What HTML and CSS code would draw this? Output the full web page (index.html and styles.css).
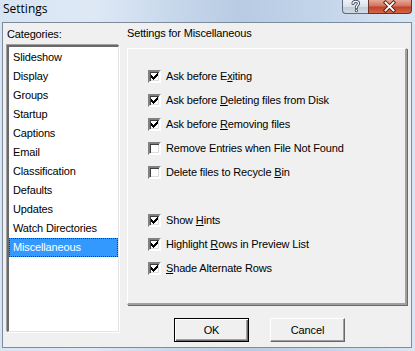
FILE: index.html
```html
<!DOCTYPE html>
<html>
<head>
<meta charset="utf-8">
<link rel="stylesheet" href="styles.css">
</head>
<body>
<div class="window">
  <div class="titlebar">
    <span class="title">Settings</span>
    <div class="caption-buttons">
      <div class="cb help">
        <svg width="25" height="13" viewBox="0 0 25 13">
          <path d="M10 3.6c0-1.5 1.2-2.2 2.7-2.2s2.8 .8 2.8 2.1c0 1.6-2.1 1.9-2.1 3.5v.7" fill="none" stroke="#3b4a5c" stroke-width="3" stroke-linecap="round"/>
          <path d="M10 3.6c0-1.5 1.2-2.2 2.7-2.2s2.8 .8 2.8 2.1c0 1.6-2.1 1.9-2.1 3.5v.7" fill="none" stroke="#fff" stroke-width="1.3" stroke-linecap="round"/>
          <circle cx="13.4" cy="10.6" r="1.6" fill="#3b4a5c"/>
          <circle cx="13.4" cy="10.6" r="0.8" fill="#fff"/>
        </svg>
      </div>
      <div class="cb close">
        <svg width="42" height="13" viewBox="0 0 42 13">
          <path d="M16.5 2.5l8 8M24.5 2.5l-8 8" stroke="#4a1d14" stroke-width="3.6" stroke-linecap="square"/>
          <path d="M16.5 2.5l8 8M24.5 2.5l-8 8" stroke="#fff" stroke-width="1.8" stroke-linecap="square"/>
        </svg>
      </div>
    </div>
  </div>
  <div class="client">
    <div class="left">
      <div class="label">Categories:</div>
      <ul class="list">
        <li>Slideshow</li>
        <li>Display</li>
        <li>Groups</li>
        <li>Startup</li>
        <li>Captions</li>
        <li>Email</li>
        <li>Classification</li>
        <li>Defaults</li>
        <li>Updates</li>
        <li>Watch Directories</li>
        <li class="selected">Miscellaneous</li>
      </ul>
    </div>
    <div class="right">
      <div class="label">Settings for Miscellaneous</div>
      <div class="panel">
        <div class="row"><span class="cbx checked"></span><span>Ask before E<u>x</u>iting</span></div>
        <div class="row"><span class="cbx checked"></span><span>Ask before <u>D</u>eleting files from Disk</span></div>
        <div class="row"><span class="cbx checked"></span><span>Ask before <u>R</u>emoving files</span></div>
        <div class="row"><span class="cbx"></span><span>Remove Entries when File Not Found</span></div>
        <div class="row"><span class="cbx"></span><span>Delete files to Recycle <u>B</u>in</span></div>
        <div class="spacer"></div>
        <div class="row"><span class="cbx checked"></span><span>Show <u>H</u>ints</span></div>
        <div class="row"><span class="cbx checked"></span><span>Highlight <u>R</u>ows in Preview List</span></div>
        <div class="row"><span class="cbx checked"></span><span><u>S</u>hade Alternate Rows</span></div>
      </div>
      <div class="buttons">
        <div class="btn default"><span>OK</span></div>
        <div class="btn"><span>Cancel</span></div>
      </div>
    </div>
  </div>
</div>
</body>
</html>
```

FILE: styles.css
```css
html, body {
  margin: 0;
  padding: 0;
}
body {
  width: 415px;
  height: 351px;
  overflow: hidden;
  font-family: "Liberation Sans", Arial, sans-serif;
  font-size: 11px;
  letter-spacing: -0.15px;
  color: #000;
}
.window {
  width: 415px;
  height: 351px;
  box-sizing: border-box;
  background: linear-gradient(90deg, #d7e4f3 0%, #dfe9f6 22%, #c9d9ec 40%, #b7cbe3 58%, #c3d5ea 78%, #d9e6f4 100%);
  display: flex;
  flex-direction: column;
}
.titlebar {
  height: 22px;
  display: flex;
  justify-content: space-between;
  align-items: flex-start;
}
.title {
  font-family: "Open Sans", "Noto Sans", sans-serif;
  font-size: 12px;
  letter-spacing: 0;
  line-height: 16px;
  padding: 1px 0 0 3px;
  color: #000;
}
.caption-buttons {
  display: flex;
  margin-right: 3px;
}
.cb {
  height: 13px;
  border: 1px solid #5d6b7c;
  border-top: none;
  display: flex;
}
.cb svg {
  display: block;
}
.help {
  width: 25px;
  border-radius: 0 0 0 4px;
  border-right: none;
  background: linear-gradient(180deg, #eef2f7 0%, #d9e1ea 50%, #c2ccd8 55%, #d2dbe5 100%);
}
.close {
  width: 42px;
  border-radius: 0 0 4px 0;
  border-color: #6b3227;
  background: linear-gradient(180deg, #e7a898 0%, #d2735f 45%, #c14228 55%, #d5654a 100%);
}
.client {
  margin: 0 3px 0 2px;
  height: 326px;
  box-sizing: border-box;
  border: 1px solid #7d8b9b;
  background: #f0f0f0;
  display: flex;
  padding: 0 4px 0 4px;
  gap: 8px;
}
.left {
  width: 112px;
  display: flex;
  flex-direction: column;
}
.label {
  line-height: 13px;
  white-space: nowrap;
}
.left .label {
  margin-top: 5px;
  margin-bottom: 4px;
}
.list {
  list-style: none;
  margin: 0;
  padding: 1px 0 0 0;
  height: 287px;
  box-sizing: border-box;
  background: #fff;
  border-style: solid;
  border-width: 2px 1px 1px 2px;
  border-color: #696969 #e3e3e3 #e3e3e3 #696969;
  box-shadow: -1px -1px 0 #a0a0a0, 1px 1px 0 #fff;
}
.list li {
  height: 19px;
  line-height: 19px;
  padding-left: 4px;
  white-space: nowrap;
}
.list li.selected {
  background: #3399ff;
  color: #fff;
  outline: 1px dotted #333;
  outline-offset: -1px;
}
.right {
  width: 280px;
  display: flex;
  flex-direction: column;
}
.right .label {
  margin-top: 4px;
  margin-bottom: 8px;
}
.panel {
  height: 257px;
  box-sizing: border-box;
  border-style: solid;
  border-width: 1px 2px 2px 1px;
  border-color: #fff #a0a0a0 #a0a0a0 #fff;
  box-shadow: 1px 1px 0 #696969;
  padding: 15px 0 0 20px;
}
.row {
  height: 24px;
  display: flex;
  align-items: center;
  gap: 5px;
  white-space: nowrap;
  line-height: 13px;
}
.spacer {
  height: 24px;
}
.cbx {
  width: 9px;
  height: 9px;
  background: #fff;
  border-style: solid;
  border-width: 2px;
  border-color: #808080 #fff #fff #808080;
  box-shadow: inset 1px 1px 0 #404040, inset -1px -1px 0 #dcdcdc;
  flex: none;
}
.cbx.checked {
  background: #fff url("data:image/svg+xml;utf8,<svg xmlns='http://www.w3.org/2000/svg' width='9' height='9' viewBox='0 0 9 9' shape-rendering='crispEdges'><path d='M1 3h1v3h-1zM2 4h1v3h-1zM3 5h1v3h-1zM4 4h1v3h-1zM5 3h1v3h-1zM6 2h1v3h-1zM7 1h1v3h-1z' fill='%23000'/></svg>") no-repeat 0 0;
}
.buttons {
  margin-top: 13px;
  padding-left: 47px;
  display: flex;
  gap: 21px;
}
.btn {
  width: 75px;
  height: 24px;
  box-sizing: border-box;
  border-style: solid;
  border-width: 1px;
  border-color: #fff #696969 #696969 #fff;
  box-shadow: inset -1px -1px 0 #a0a0a0;
  background: #f0f0f0;
  display: flex;
  align-items: center;
  justify-content: center;
}
.btn.default {
  border: 1px solid #000;
  box-shadow: inset 1px 1px 0 #fff, inset -1px -1px 0 #696969, inset -2px -2px 0 #a0a0a0;
}
```
